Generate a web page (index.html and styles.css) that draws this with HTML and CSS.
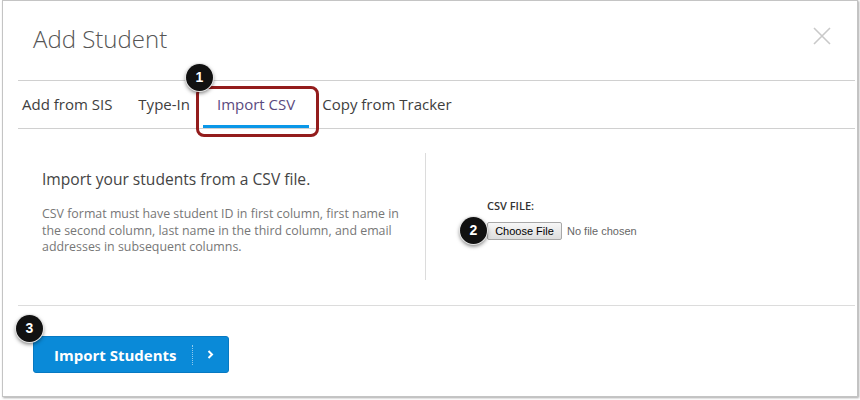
FILE: index.html
```html
<!DOCTYPE html>
<html>
<head>
<meta charset="utf-8">
<link rel="stylesheet" href="styles.css">
</head>
<body>
<div class="frame">
  <header class="header">
    <h1 class="title">Add Student</h1>
    <svg class="close" width="18" height="18" viewBox="0 0 18 18"><path d="M1 1 L17 17 M17 1 L1 17" stroke="#c9c9c9" stroke-width="1.6" fill="none"/></svg>
  </header>
  <nav class="tabs">
    <span class="tab">Add from SIS</span>
    <span class="tab">Type-In</span>
    <span class="tab active">Import CSV</span>
    <span class="tab">Copy from Tracker</span>
  </nav>
  <section class="content">
    <div class="col-left">
      <h2 class="heading">Import your students from a CSV file.</h2>
      <p class="desc">CSV format must have student ID in first column, first name in the second column, last name in the third column, and email addresses in subsequent columns.</p>
    </div>
    <div class="col-right">
      <div class="label">CSV FILE:</div>
      <div class="file">
        <span class="file-btn">Choose File</span>
        <span class="file-none">No file chosen</span>
      </div>
    </div>
  </section>
  <footer class="footer">
    <button class="primary">
      <span class="primary-text">Import Students</span>
      <span class="primary-sep"></span>
      <svg class="chev" width="7" height="9" viewBox="0 0 7 9"><path d="M1.5 1 L5 4.5 L1.5 8" stroke="#fff" stroke-width="2" fill="none"/></svg>
    </button>
  </footer>

  <div class="callout"></div>
  <div class="badge b1">1</div>
  <div class="badge b2">2</div>
  <div class="badge b3">3</div>
</div>
</body>
</html>
```
FILE: styles.css
```css
html, body {
  margin: 0;
  padding: 0;
  background: #fff;
}
body {
  width: 860px;
  height: 400px;
  overflow: hidden;
  font-family: "Open Sans", "Liberation Sans", sans-serif;
}
.frame {
  position: relative;
  box-sizing: border-box;
  width: 856px;
  height: 397px;
  margin-left: 2px;
  border: 1px solid #c4c4c4;
  box-shadow: 1px 1px 2px rgba(0, 0, 0, 0.35);
  background: #fff;
}
.header {
  display: flex;
  justify-content: space-between;
  align-items: flex-start;
  height: 79px;
  box-sizing: border-box;
  padding: 0 26px 0 30px;
}
.title {
  margin: 0;
  padding-top: 22px;
  font-size: 24px;
  font-weight: 300;
  line-height: 1.362;
  color: #555;
}
.close {
  margin-top: 26px;
}
.tabs {
  display: flex;
  margin: 0 2px 0 15px;
  border-top: 1px solid #d0d0d0;
  border-bottom: 1px solid #d0d0d0;
  height: 47px;
}
.tab {
  position: relative;
  padding: 0 13px;
  font-size: 15px;
  line-height: 47px;
  color: #3e3e3e;
}
.tab:first-child {
  padding-left: 4px;
}
.tab.active {
  color: #5a4a80;
  padding: 0 14px;
}
.tab.active::after {
  content: "";
  position: absolute;
  left: 0;
  right: 0;
  bottom: 0;
  height: 3px;
  background: #0a97e8;
}
.content {
  display: flex;
  margin: 0 2px 0 15px;
  padding: 24px 0 25px;
  border-bottom: 1px solid #dcdcdc;
}
.col-left {
  box-sizing: border-box;
  width: 408px;
  height: 127px;
  padding: 15px 15px 0 24px;
  border-right: 1px solid #dcdcdc;
}
.heading {
  margin: 0;
  font-size: 15.6px;
  font-weight: 400;
  line-height: 22px;
  color: #444;
}
.desc {
  margin: 16px 0 0;
  font-size: 12.4px;
  line-height: 16.5px;
  color: #777;
}
.col-right {
  padding: 46px 0 0 61px;
}
.label {
  font-size: 11px;
  font-weight: 600;
  line-height: 14px;
  color: #333;
}
.file {
  display: flex;
  align-items: center;
  margin-top: 9px;
  font-family: "Liberation Sans", Arial, sans-serif;
  font-size: 11px;
}
.file-btn {
  box-sizing: border-box;
  height: 18px;
  width: 75px;
  display: flex;
  align-items: center;
  justify-content: center;
  border: 1px solid #a8a8a8;
  border-radius: 2px;
  background: linear-gradient(#f7f7f7, #dddddd);
  color: #000;
}
.file-none {
  margin-left: 5px;
  color: #666;
}
.footer {
  padding: 30px 0 0 30px;
}
.primary {
  display: flex;
  align-items: center;
  box-sizing: border-box;
  width: 196px;
  height: 37px;
  padding: 0 0 0 20px;
  border: 1px solid #0779c2;
  border-radius: 3px;
  background: #0a8ad8;
  font-family: "Open Sans", "Liberation Sans", sans-serif;
  font-size: 15px;
  font-weight: 700;
  color: #fff;
}
.primary-text {
  line-height: 20px;
}
.primary-sep {
  width: 0;
  height: 20px;
  margin-left: 15px;
  border-left: 1px dotted rgba(255, 255, 255, 0.55);
}
.chev {
  margin-left: 14px;
}
.callout {
  position: absolute;
  left: 193px;
  top: 85px;
  box-sizing: border-box;
  width: 123px;
  height: 51px;
  border: 3px solid #931c1c;
  border-radius: 8px;
}
.badge {
  position: absolute;
  box-sizing: border-box;
  width: 27px;
  height: 27px;
  border-radius: 50%;
  background: #111;
  box-shadow: 0 0 0 1px #e6e6e6, 0 2px 4px rgba(0, 0, 0, 0.6);
  color: #fff;
  font-family: "Liberation Sans", Arial, sans-serif;
  font-size: 14px;
  font-weight: 700;
  line-height: 27px;
  text-align: center;
}
.b1 { left: 183px; top: 63px; }
.b2 { left: 457px; top: 216px; }
.b3 { left: 13px; top: 314px; }
```
